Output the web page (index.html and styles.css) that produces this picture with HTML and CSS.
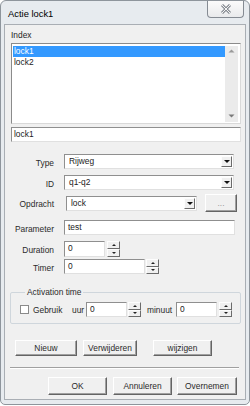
FILE: index.html
```html
<!DOCTYPE html>
<html>
<head>
<meta charset="utf-8">
<link rel="stylesheet" href="styles.css">
</head>
<body>
<div class="window">
  <div class="titlebar">
    <span class="title">Actie lock1</span>
    <span class="close">
      <svg width="12" height="10" viewBox="0 0 12 10">
        <path d="M2 1 L10 9 M10 1 L2 9" stroke="#8a8f96" stroke-width="3" fill="none"/>
        <path d="M2 1 L10 9 M10 1 L2 9" stroke="#f4f4f4" stroke-width="1" fill="none"/>
      </svg>
    </span>
  </div>
  <div class="client">
    <div class="index-label">Index</div>
    <div class="listbox">
      <div class="items">
        <div class="item sel">lock1</div>
        <div class="item">lock2</div>
      </div>
      <div class="vscroll">
        <svg width="7" height="4" viewBox="0 0 7 4"><path d="M0.5 3.5 L3.5 0.5 L6.5 3.5 Z" fill="#9a9a9a"/></svg>
        <svg width="7" height="4" viewBox="0 0 7 4"><path d="M0.5 0.5 L3.5 3.5 L6.5 0.5 Z" fill="#7a7a7a"/></svg>
      </div>
    </div>
    <div class="textbox name">lock1</div>

    <div class="row r-type">
      <span class="lbl">Type</span>
      <div class="combo w-type"><span class="val">Rijweg</span><span class="ddbtn"><i class="tri"></i></span></div>
    </div>
    <div class="row r-id">
      <span class="lbl">ID</span>
      <div class="combo w-type"><span class="val">q1-q2</span><span class="ddbtn"><i class="tri"></i></span></div>
    </div>
    <div class="row r-op">
      <span class="lbl">Opdracht</span>
      <div class="combo w-op"><span class="val">lock</span><span class="ddbtn"><i class="tri"></i></span></div>
      <span class="btn dots">...</span>
    </div>
    <div class="row r-par">
      <span class="lbl">Parameter</span>
      <div class="textbox w-par">test</div>
    </div>
    <div class="row r-dur">
      <span class="lbl">Duration</span>
      <div class="textbox w-dur">0</div>
      <div class="spin s-dur"><span class="sb"><i class="up"></i></span><span class="sb"><i class="dn"></i></span></div>
    </div>
    <div class="row r-tim">
      <span class="lbl">Timer</span>
      <div class="textbox w-tim">0</div>
      <div class="spin s-tim"><span class="sb"><i class="up"></i></span><span class="sb"><i class="dn"></i></span></div>
    </div>

    <fieldset class="group">
      <legend>Activation time</legend>
      <div class="grow">
        <span class="check"></span>
        <span class="t t-geb">Gebruik</span>
        <span class="t t-uur">uur</span>
        <div class="textbox w-small">0</div>
        <div class="spin s-uur"><span class="sb"><i class="up"></i></span><span class="sb"><i class="dn"></i></span></div>
        <span class="t t-min">minuut</span>
        <div class="textbox w-small">0</div>
        <div class="spin s-min"><span class="sb"><i class="up"></i></span><span class="sb"><i class="dn"></i></span></div>
      </div>
    </fieldset>

    <div class="btnrow top">
      <span class="btn b-nieuw">Nieuw</span>
      <span class="btn b-verw">Verwijderen</span>
      <span class="btn b-wijz">wijzigen</span>
    </div>
    <div class="sep"></div>
    <div class="btnrow bottom">
      <span class="btn b-ok">OK</span>
      <span class="btn b-ann">Annuleren</span>
      <span class="btn b-over">Overnemen</span>
    </div>
  </div>
</div>
</body>
</html>
```
FILE: styles.css
```css
* { box-sizing: border-box; }
html, body { margin: 0; padding: 0; background: #ffffff; }
body {
  font-family: "Liberation Sans", Arial, sans-serif;
  font-size: 8.4px;
  color: #1e1e1e;
}
.window {
  width: 250px;
  height: 405px;
  background: #e7ebef;
  border: 1px solid #8e959c;
  border-radius: 6px 6px 5px 5px;
  display: flex;
  flex-direction: column;
  padding: 0 3px 4px 3px;
}
.titlebar {
  height: 23px;
  display: flex;
  align-items: flex-start;
  justify-content: space-between;
}
.title {
  font-size: 9.4px;
  line-height: 12px;
  margin: 7px 0 0 4px;
  color: #000;
}
.close {
  width: 37px;
  height: 17px;
  margin-right: 2px;
  border: 1px solid #858b93;
  border-top: none;
  border-radius: 0 0 4px 4px;
  background: linear-gradient(#fbfbfb, #e9eaec);
  display: flex;
  align-items: center;
  justify-content: center;
}
.client {
  flex: 1;
  background: #f0f0f0;
  border: 1px solid #a9aeb4;
}
.index-label {
  height: 18px;
  padding: 5px 0 0 6px;
  line-height: 10px;
}
.listbox {
  margin-left: 6px;
  width: 230px;
  height: 81px;
  background: #fff;
  border: 1px solid #8b8b8b;
  border-right-color: #d9d9d9;
  border-bottom-color: #d9d9d9;
  display: flex;
  padding: 2px 1px 1px 1px;
}
.items { flex: 1; }
.item {
  height: 10px;
  line-height: 10px;
  padding-left: 1px;
  color: #222;
}
.item.sel { background: #3399ff; color: #fff; height: 11px; line-height: 11px; }
.vscroll {
  width: 13px;
  background: #ebebeb;
  margin-right: 1px;
  display: flex;
  flex-direction: column;
  align-items: center;
  justify-content: space-between;
  padding: 3px 0 4px 0;
}
.textbox {
  height: 15px;
  background: #fff;
  border: 1px solid #8f8f8f;
  border-right-color: #e0e0e0;
  border-bottom-color: #e0e0e0;
  padding-left: 3px;
  line-height: 12px;
  color: #222;
}
.name { margin: 3px 0 0 6px; width: 230px; padding-left: 2px; }
.row {
  display: flex;
  align-items: center;
  height: 15px;
}
.lbl {
  width: 49px;
  text-align: right;
  margin-right: 10px;
  color: #2a2a2a;
  line-height: 10px;
  padding-top: 2px;
}
.r-type { margin-top: 12px; }
.r-id { margin-top: 6px; }
.r-op { margin-top: 4px; height: 18px; }
.r-op .lbl { margin-right: 12px; }
.r-par { margin-top: 8px; }
.r-dur { margin-top: 6px; height: 16px; }
.r-tim { margin-top: 2px; }
.combo {
  height: 15px;
  background: #fff;
  border: 1px solid #8f8f8f;
  border-right-color: #e0e0e0;
  border-bottom-color: #e0e0e0;
  display: flex;
  align-items: stretch;
  padding: 1px;
}
.combo .val { flex: 1; padding-left: 3px; line-height: 11px; color: #222; }
.w-type { width: 170px; }
.w-op { width: 131px; }
.ddbtn {
  width: 11px;
  background: #f0f0f0;
  border: 1px solid;
  border-color: #fdfdfd #6b6b6b #6b6b6b #fdfdfd;
  display: flex;
  align-items: center;
  justify-content: center;
}
.tri {
  width: 0; height: 0;
  border-left: 3px solid transparent;
  border-right: 3px solid transparent;
  border-top: 3px solid #111;
}
.btn {
  display: flex;
  align-items: center;
  justify-content: center;
  background: #f0f0f0;
  border: 1px solid;
  border-color: #ffffff #646464 #646464 #ffffff;
  box-shadow: inset -1px -1px 0 #a0a0a0;
  color: #2a2a2a;
  line-height: 10px;
}
.dots { width: 32px; height: 18px; margin-left: 8px; color: #9a9a9a; }
.w-par { width: 171px; }
.w-dur { width: 41px; height: 16px; }
.w-tim { width: 81px; }
.spin {
  width: 13px;
  display: flex;
  flex-direction: column;
}
.s-dur { height: 16px; margin-left: 2px; }
.s-tim { height: 15px; margin-left: 1px; }
.sb {
  flex: 1;
  background: #f0f0f0;
  border: 1px solid;
  border-color: #fdfdfd #6b6b6b #6b6b6b #fdfdfd;
  display: flex;
  align-items: center;
  justify-content: center;
}
.up, .dn { width: 0; height: 0; border-left: 2px solid transparent; border-right: 2px solid transparent; }
.up { border-bottom: 2px solid #222; }
.dn { border-top: 2px solid #222; }
.group {
  margin: 13px 0 0 5px;
  width: 231px;
  height: 37px;
  border: 1px solid #cfd6dc;
  border-radius: 2px;
  padding: 5px 0 0 9px;
}
.group legend {
  padding: 0 2px;
  margin-left: 5px;
  line-height: 10px;
  color: #2a2a2a;
}
.grow {
  display: flex;
  align-items: center;
  height: 15px;
}
.check {
  width: 9px;
  height: 9px;
  background: #fff;
  border: 1px solid #8a8a8a;
  margin-right: 4px;
}
.t { color: #2a2a2a; white-space: nowrap; }
.t-geb { width: 39px; }
.t-uur { width: 14px; }
.t-min { width: 29px; }
.w-small { width: 41px; }
.s-uur { height: 15px; margin-left: 1px; margin-right: 6px; }
.s-min { height: 15px; margin-left: 2px; }
.btnrow { display: flex; }
.btnrow.top { margin-top: 16px; padding-left: 10px; height: 16px; }
.b-nieuw { width: 62px; }
.b-verw { width: 54px; margin-left: 6px; }
.b-wijz { width: 59px; margin-left: 16px; }
.sep {
  margin: 11px 0 0 5px;
  width: 229px;
  height: 2px;
  border-top: 1px solid #a0a0a0;
  border-bottom: 1px solid #ffffff;
}
.btnrow.bottom { margin-top: 8px; padding-left: 43px; height: 18px; }
.b-ok { width: 59px; }
.b-ann { width: 59px; margin-left: 6px; }
.b-over { width: 60px; margin-left: 5px; }
```
